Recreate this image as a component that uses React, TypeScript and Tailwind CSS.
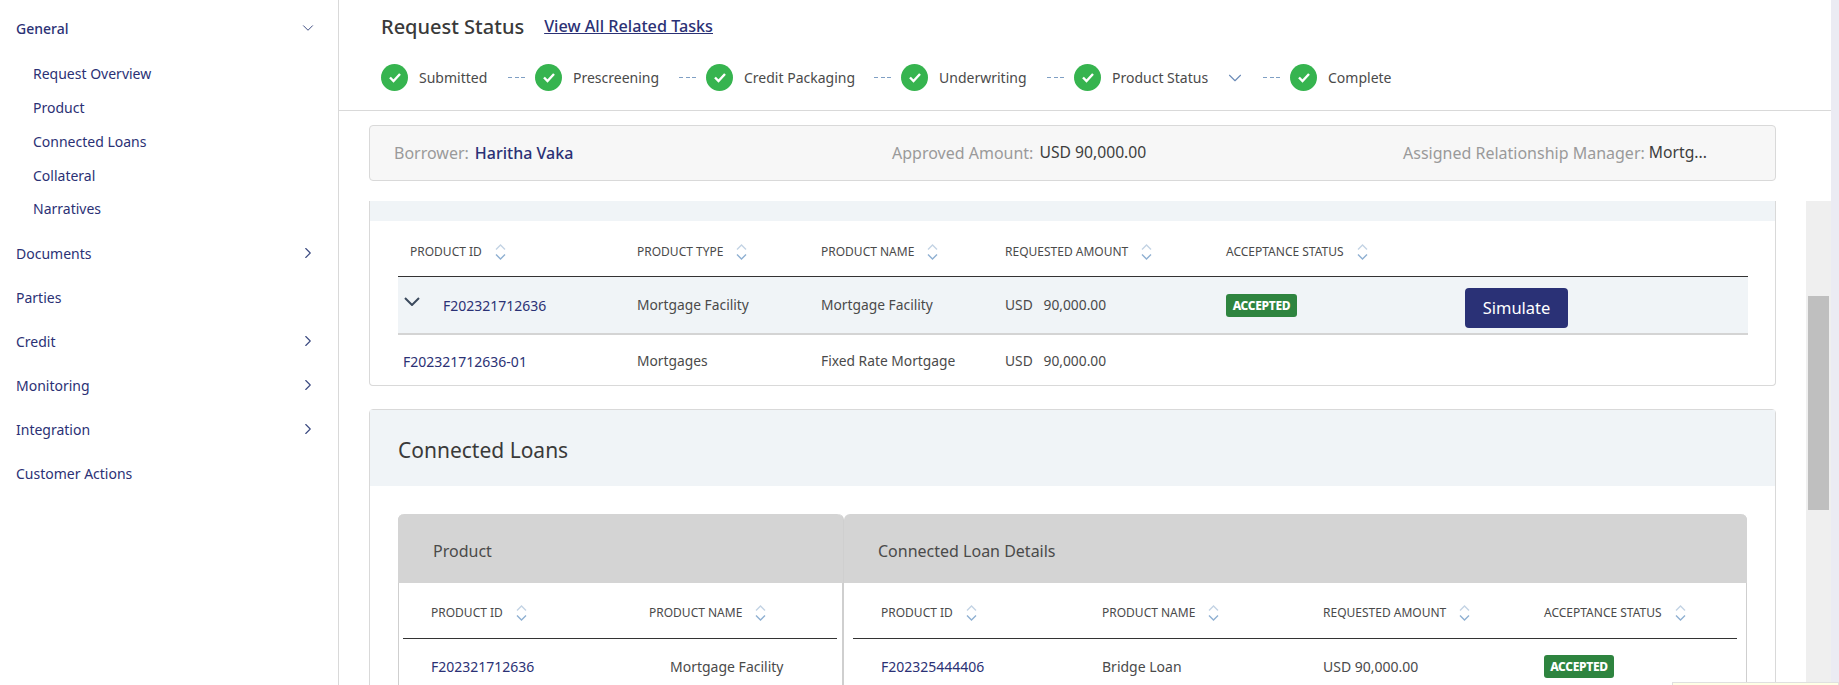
import React from "react";
import { ChevronDown, ChevronRight } from "lucide-react";

const Sort = () => (
  <svg width="11" height="16" viewBox="0 0 11 16" fill="none" className="shrink-0">
    <path d="M1 5.5 L5.5 1 L10 5.5" stroke="#c3d3e4" strokeWidth="1.4" />
    <path d="M1 10.5 L5.5 15 L10 10.5" stroke="#8fb0d2" strokeWidth="1.4" />
  </svg>
);

const Head = ({ t }: { t: string }) => (
  <div className="flex items-center gap-[13px] text-[12px] text-[#4a4a4a] whitespace-nowrap">
    <span>{t}</span>
    <Sort />
  </div>
);

const Check = () => (
  <span className="w-[27px] h-[27px] rounded-full bg-[#36b44f] flex items-center justify-center shrink-0">
    <svg width="14" height="11" viewBox="0 0 14 11" fill="none">
      <path d="M2 5.5 L5.5 9 L12 2" stroke="#fff" strokeWidth="2.4" />
    </svg>
  </span>
);

const Dash = () => (
  <span className="w-[17px] mx-[10px] shrink-0 flex justify-between">
    <i className="w-[4px] h-px bg-[#7f9fc4]" />
    <i className="w-[4px] h-px bg-[#7f9fc4]" />
    <i className="w-[4px] h-px bg-[#7f9fc4]" />
  </span>
);

const Step = ({ t, w }: { t: string; w: string }) => (
  <div className={`flex items-center gap-[11px] ${w}`}>
    <Check />
    <span className="text-[14px] text-[#4a4a4a] whitespace-nowrap">{t}</span>
  </div>
);

const Badge = ({ w = "w-[71px]" }: { w?: string }) => (
  <span className={`${w} h-[23px] mt-[1px] rounded-[3px] bg-[#2e843f] text-white text-[12px] font-extrabold tracking-[-0.3px] flex items-center justify-center`}>
    ACCEPTED
  </span>
);

const Nav = ({ t, open, closed, h = "h-[44px]" }: { t: string; open?: boolean; closed?: boolean; h?: string }) => (
  <div className={`${h} flex items-center justify-between pl-[16px] pr-[21px] text-[14px] text-[#2b3175] ${open ? "font-medium" : ""}`}>
    <span>{t}</span>
    {open && <ChevronDown size={18} strokeWidth={1.3} color="#3b4a80" />}
    {closed && <ChevronRight size={18} strokeWidth={1.5} color="#3b4a80" />}
  </div>
);

const Sub = ({ t, h = "h-[34px]" }: { t: string; h?: string }) => (
  <div className={`${h} flex items-center pl-[33px] text-[14px] text-[#2b3175]`}>{t}</div>
);

const cols1 = "grid grid-cols-[227px_184px_184px_221px_239px_1fr] items-center";

export default function App() {
  return (
    <div
      className="relative flex w-[1839px] h-[685px] overflow-hidden bg-white"
      style={{ fontFamily: '"Noto Sans", "Open Sans", sans-serif' }}
    >
      <aside className="w-[339px] shrink-0 border-r border-[#d9d9d9] pt-[6px]">
        <Nav t="General" open />
        <div className="mt-[6px] mb-[7px] flex flex-col">
          <Sub t="Request Overview" />
          <Sub t="Product" />
          <Sub t="Connected Loans" />
          <Sub t="Collateral" />
          <Sub t="Narratives" h="h-[32px]" />
        </div>
        <Nav t="Documents" closed />
        <Nav t="Parties" />
        <Nav t="Credit" closed />
        <Nav t="Monitoring" closed />
        <Nav t="Integration" closed />
        <Nav t="Customer Actions" />
      </aside>

      <main className="flex-1 min-w-0 flex flex-col">
        <header className="h-[111px] shrink-0 border-b border-[#d9d9d9] pr-[8px] pl-[42px]">
          <div className="flex items-center h-[53px] gap-[20px]">
            <h1 className="text-[20px] font-medium text-[#3a3a3a]">Request Status</h1>
            <a className="text-[16.2px] font-medium text-[#2b3175] underline">View All Related Tasks</a>
          </div>
          <div className="flex items-center h-[49px]">
            <Step t="Submitted" w="w-[117px]" />
            <Dash />
            <Step t="Prescreening" w="w-[134px]" />
            <Dash />
            <Step t="Credit Packaging" w="w-[158px]" />
            <Dash />
            <Step t="Underwriting" w="w-[136px]" />
            <Dash />
            <Step t="Product Status" w="w-[136px]" />
            <ChevronDown size={22} strokeWidth={1.2} color="#6b8bb8" className="ml-[14px] mr-[7px] shrink-0" />
            <Dash />
            <Step t="Complete" w="w-[110px]" />
          </div>
        </header>

        <div className="flex-1 flex min-h-0">
          <div className="w-[1467px] shrink-0 pl-[30px] pt-[14px] overflow-hidden">
            <div className="w-[1407px] h-[56px] bg-[#f7f7f7] border border-[#d9d9d9] rounded-[4px] flex items-center pl-[24px] text-[16px] whitespace-nowrap">
              <div className="w-[498px] flex gap-[6px]">
                <span className="text-[#9a9a9a]">Borrower:</span>
                <span className="font-medium text-[#2b3175]">Haritha Vaka</span>
              </div>
              <div className="w-[511px] flex gap-[6px]">
                <span className="text-[#9a9a9a]">Approved Amount:</span>
                <span className="text-[15.7px] text-[#3e3e3e]">USD 90,000.00</span>
              </div>
              <div className="flex gap-[4px]">
                <span className="text-[#9a9a9a]">Assigned Relationship Manager:</span>
                <span className="text-[15.7px] text-[#3e3e3e]">Mortg...</span>
              </div>
            </div>

            <section className="mt-[20px] w-[1407px] h-[185px] border-x border-b border-[#d9d9d9] rounded-b-[4px]">
              <div className="h-[20px] bg-[#f0f4f7]" />
              <div className="mx-[28px] w-[1350px]">
                <div className={`${cols1} h-[56px] pt-[6px] border-b border-[#333] pl-[12px]`}>
                  <Head t="PRODUCT ID" />
                  <Head t="PRODUCT TYPE" />
                  <Head t="PRODUCT NAME" />
                  <Head t="REQUESTED AMOUNT" />
                  <Head t="ACCEPTANCE STATUS" />
                </div>
                <div className={`${cols1} h-[58px] bg-[#f0f4f7] border-b-2 border-[#d4d4d4] pl-[12px] text-[13.8px] text-[#4a4a4a]`}>
                  <div className="flex items-center -ml-[6px] gap-[23px]">
                    <svg width="16" height="9" viewBox="0 0 16 9" fill="none" className="-mt-[7px]">
                      <path d="M1 1 L8 8 L15 1" stroke="#3c4a5e" strokeWidth="2" />
                    </svg>
                    <span className="text-[14px] text-[#2b3175]">F202321712636</span>
                  </div>
                  <span>Mortgage Facility</span>
                  <span>Mortgage Facility</span>
                  <span>USD&nbsp;&nbsp;&nbsp;90,000.00</span>
                  <Badge />
                  <button className="w-[103px] h-[40px] mt-[6px] rounded-[4px] bg-[#2a3176] text-white text-[16.5px]">
                    Simulate
                  </button>
                </div>
                <div className={`${cols1} h-[50px] pt-[2px] pl-[12px] text-[13.8px] text-[#4a4a4a]`}>
                  <span className="-ml-[7px] text-[14px] text-[#2b3175] whitespace-nowrap">F202321712636-01</span>
                  <span>Mortgages</span>
                  <span>Fixed Rate Mortgage</span>
                  <span>USD&nbsp;&nbsp;&nbsp;90,000.00</span>
                </div>
              </div>
            </section>

            <section className="mt-[23px] w-[1407px] h-[300px] border border-[#d9d9d9] rounded-[4px]">
              <div className="h-[76px] pt-[5px] bg-[#f0f4f7] flex items-center pl-[28px] text-[21px] text-[#3a3a3a]">
                Connected Loans
              </div>
              <div className="mx-[28px] mt-[28px] w-[1349px] flex">
                <div className="w-[446px] shrink-0 border-l border-r-2 border-[#cfcfcf] rounded-t-[6px] h-[300px]">
                  <div className="-mx-px h-[69px] pt-[4px] rounded-t-[6px] bg-[#d4d4d4] flex items-center pl-[35px] text-[16px] text-[#4a4a4a]">
                    Product
                  </div>
                  <div className="ml-[4px] mr-[5px]">
                    <div className="grid grid-cols-[218px_1fr] items-center h-[56px] pt-[5px] border-b border-[#333] pl-[28px]">
                      <Head t="PRODUCT ID" />
                      <Head t="PRODUCT NAME" />
                    </div>
                    <div className="grid grid-cols-[239px_1fr] items-center h-[54px] pl-[28px] text-[14px] text-[#4a4a4a]">
                      <span className="text-[#2b3175]">F202321712636</span>
                      <span>Mortgage Facility</span>
                    </div>
                  </div>
                </div>
                <div className="flex-1 border-r border-[#cfcfcf] rounded-t-[6px] h-[300px]">
                  <div className="-mr-px h-[69px] pt-[4px] rounded-t-[6px] bg-[#d4d4d4] flex items-center pl-[34px] text-[16px] text-[#4a4a4a]">
                    Connected Loan Details
                  </div>
                  <div className="mx-[9px]">
                    <div className="grid grid-cols-[221px_221px_221px_1fr] items-center h-[56px] pt-[5px] border-b border-[#333] pl-[28px]">
                      <Head t="PRODUCT ID" />
                      <Head t="PRODUCT NAME" />
                      <Head t="REQUESTED AMOUNT" />
                      <Head t="ACCEPTANCE STATUS" />
                    </div>
                    <div className="grid grid-cols-[221px_221px_221px_1fr] items-center h-[54px] pl-[28px] text-[14px] text-[#4a4a4a]">
                      <span className="text-[#2b3175]">F202325444406</span>
                      <span>Bridge Loan</span>
                      <span>USD 90,000.00</span>
                      <Badge w="w-[70px]" />
                    </div>
                  </div>
                </div>
              </div>
            </section>
          </div>
          <div className="w-[25px] shrink-0 mt-[90px] bg-[#efefef] px-[2px]">
            <div className="mt-[95px] h-[214px] bg-[#bfbfbf]" />
          </div>
        </div>
      </main>

      <div className="absolute right-0 top-0 w-[8px] h-full bg-[#ebebf3]" />
      <div className="absolute right-0 top-[682px] w-[167px] h-[10px] bg-[#ffffe6] border border-[#e0e0e0]" />
    </div>
  );
}
